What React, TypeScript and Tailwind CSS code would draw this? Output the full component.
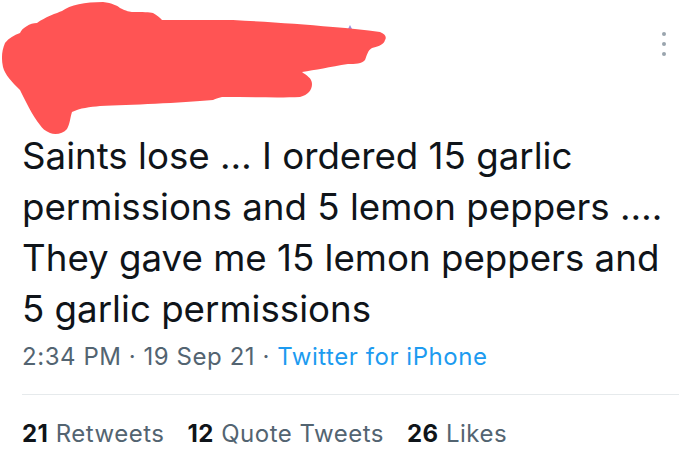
import React from 'react'

// Tweet detail view, header hidden under a marker scribble
const Scribble = () => (
  <svg
    className="absolute left-0 top-0"
    width="400"
    height="140"
    viewBox="0 0 400 140"
    aria-hidden
  >
    <path d="M38 26 C42 22 48 19 54 18 L50 24 Z" fill="#4a9fd8" />
    <path d="M350 25 l3 6 l-6 0 z" fill="#9b8fe0" />
    <path
      fill="#ff5454"
      d="M20 33 C22 28 30 23 37 23 C45 17 57 13 62 11 C70 5 85 2 103 2 C112 3 118 6 120 8 C126 11 130 12 133 12 C142 12 150 12 153 13 C157 15 160 18 162 20 C190 20 215 20 233 20 C270 22 300 24 333 27 C350 28 365 30 380 32 C385 34 387 37 385 40 C384 44 380 46 372 48 C368 50 367 55 365 60 C362 64 355 64 348 64 C330 67 315 70 302 72 C306 75 312 78 312 84 C312 90 308 95 300 97 C280 98 250 97 222 97 C218 98 215 99 213 100 C180 103 130 105 100 106 C90 107 80 108 72 112 C70 118 70 124 67 129 C63 134 55 135 50 133 C45 131 42 128 40 125 C32 115 25 100 20 90 C12 82 5 75 3 67 C1 58 2 50 5 43 C9 38 14 35 20 33 Z"
    />
  </svg>
)

export default function App() {
  return (
    <div
      className="w-[700px] h-[472px] bg-white overflow-hidden flex flex-col pl-[22px] pr-[21px]"
      style={{ fontFamily: 'Inter, "Liberation Sans", Arial, sans-serif' }}
    >
      {/* Header (redacted) */}
      <div className="relative h-[130px] shrink-0 -ml-[22px] -mr-[21px] flex justify-end">
        <Scribble />
        <div className="flex flex-col items-center gap-[6px] pt-[32px] pr-[34px]">
          <span className="w-[4px] h-[4px] rounded-full bg-[#9aa5ae]" />
          <span className="w-[4px] h-[4px] rounded-full bg-[#9aa5ae]" />
          <span className="w-[4px] h-[4px] rounded-full bg-[#9aa5ae]" />
        </div>
      </div>

      {/* Body */}
      <p className="text-[36.7px] leading-[51px] text-[#0f1419]">
        Saints lose … I ordered 15 garlic
        <br />
        permissions and 5 lemon peppers ….
        <br />
        They gave me 15 lemon peppers and
        <br />
        5 garlic permissions
      </p>

      {/* Meta */}
      <div className="mt-[7px] text-[24px] leading-[32px] tracking-[0.55px] text-[#536471]">
        2:34 PM · 19 Sep 21 · <span className="text-[#1d9bf0]">Twitter for iPhone</span>
      </div>

      <div className="mt-[21px] h-px bg-[#e6eaec]" />

      {/* Stats */}
      <div className="mt-[23px] flex gap-[23px] text-[24px] leading-[32px] tracking-[0.5px] text-[#536471]">
        <span>
          <b className="text-[#0f1419]">21</b> Retweets
        </span>
        <span>
          <b className="text-[#0f1419]">12</b> Quote Tweets
        </span>
        <span>
          <b className="text-[#0f1419]">26</b> Likes
        </span>
      </div>
    </div>
  )
}
